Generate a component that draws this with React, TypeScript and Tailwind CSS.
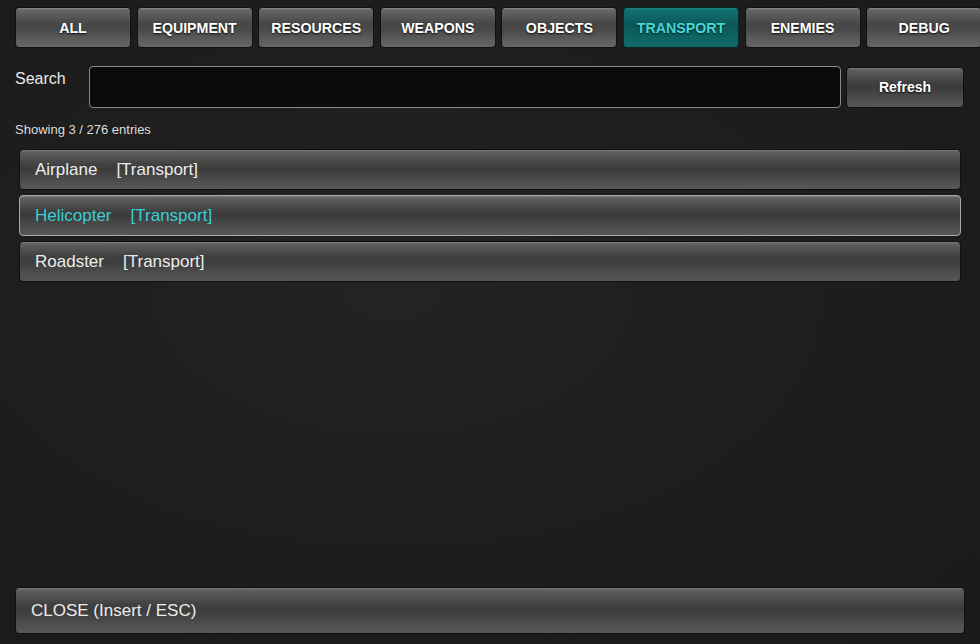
import React from 'react';

const TABS = ['ALL', 'EQUIPMENT', 'RESOURCES', 'WEAPONS', 'OBJECTS', 'TRANSPORT', 'ENEMIES', 'DEBUG'];

const ENTRIES = [
  { name: 'Airplane', kind: 'Transport' },
  { name: 'Helicopter', kind: 'Transport' },
  { name: 'Roadster', kind: 'Transport' },
];

// glossy grey bar used by buttons and list rows
const bevel =
  'bg-[linear-gradient(to_bottom,#7c7c7c_0px,#5e5e5e_2px,#404040_38%,#3c3c3c_50%,#4e4e4e_80%,#575757_100%)] border border-[#101010] rounded-[4px]';

const tabBevel =
  'bg-[linear-gradient(to_bottom,#8a8a8a_0px,#666_2px,#474747_40%,#4a4a4a_55%,#5e5e5e_85%,#666_100%)] border border-[#101010] rounded-[4px]';

export default function App() {
  const active = 'TRANSPORT';
  const selected = 'Helicopter';

  return (
    <div
      className="w-[980px] h-[644px] overflow-hidden bg-[radial-gradient(ellipse_at_40%_45%,#232323_0%,#1d1d1d_55%,#1a1a1a_100%)] text-[#e8e8e8] flex flex-col"
      style={{ fontFamily: '"Liberation Sans", Arial, sans-serif' }}
    >
      <div className="flex gap-[5.6px] pl-[15px] pt-[7px] shrink-0">
        {TABS.map((tab) => (
          <button
            key={tab}
            className={
              tab === active
                ? 'w-[116px] h-[41px] pt-[2px] shrink-0 rounded-[4px] border border-[#0a2a2a] bg-[linear-gradient(to_bottom,#1e8686_0px,#137070_2px,#0b5858_45%,#0e6262_75%,#116a6a_100%)] text-[14.2px] font-bold text-[#45d8d8] [text-shadow:0_1px_2px_rgba(0,0,0,0.7)]'
                : `w-[116px] h-[41px] pt-[2px] shrink-0 ${tabBevel} text-[14.2px] font-bold text-white [text-shadow:0_1px_2px_rgba(0,0,0,0.9)]`
            }
          >
            {tab}
          </button>
        ))}
      </div>

      <div className="flex items-start pl-[15px] pr-[16px] mt-[18px]">
        <span className="text-[16px] w-[74px] pt-[1px]">Search</span>
        <div className="flex-1 h-[42px] rounded-[4px] border border-[#8a8a8a] bg-[#0b0b0b]" />
        <button className={`ml-[5px] w-[118px] h-[41px] mt-[1px] ${bevel} text-[14px] font-bold text-white [text-shadow:0_1px_2px_rgba(0,0,0,0.9)]`}>
          Refresh
        </button>
      </div>

      <div className="pl-[15px] mt-[14px] text-[13px] leading-[16px] text-[#dcdcdc]">Showing 3 / 276 entries</div>

      <div className="flex flex-col gap-[5px] pl-[19px] pr-[19px] mt-[11px]">
        {ENTRIES.map((e) =>
          e.name === selected ? (
            <div
              key={e.name}
              className="h-[41px] flex items-center pl-[15px] rounded-[4px] border border-[#a8a8a8] bg-[linear-gradient(to_bottom,#808080_0px,#606060_2px,#404040_38%,#3c3c3c_50%,#4e4e4e_80%,#575757_100%)] text-[17px] text-[#3ccdd6]"
            >
              <span>{e.name}</span>
              <span className="ml-[19px]">[{e.kind}]</span>
            </div>
          ) : (
            <div key={e.name} className={`h-[41px] flex items-center pl-[15px] ${bevel} text-[17px] text-[#ececec]`}>
              <span>{e.name}</span>
              <span className="ml-[19px]">[{e.kind}]</span>
            </div>
          )
        )}
      </div>

      <div className="flex-1" />

      <div className="pl-[15px] pr-[15px] pb-[10px]">
        <button className={`w-full h-[47px] text-left pl-[15px] ${bevel} text-[17px] text-[#ececec]`}>
          CLOSE (Insert / ESC)
        </button>
      </div>
    </div>
  );
}
